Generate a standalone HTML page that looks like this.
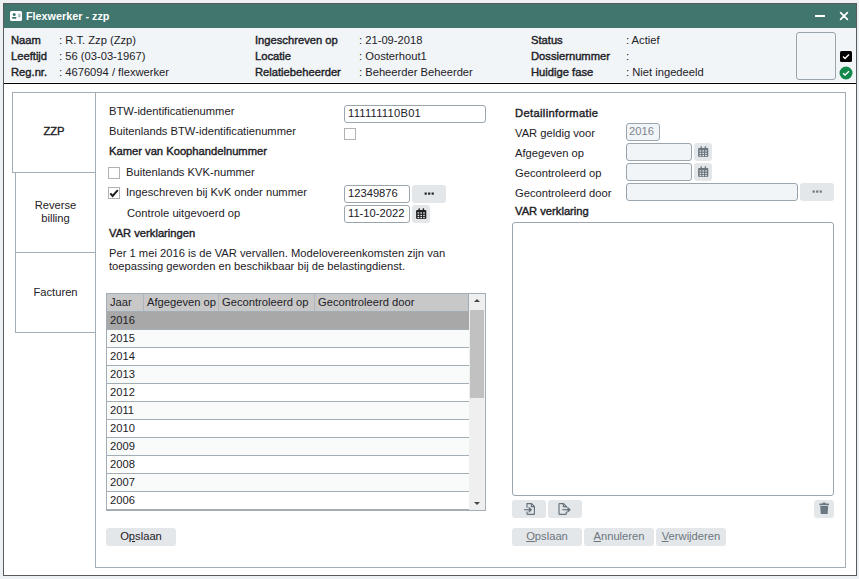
<!DOCTYPE html>
<html><head><meta charset="utf-8">
<style>
*{box-sizing:border-box;margin:0;padding:0}
html,body{width:859px;height:579px;overflow:hidden;background:#eef1f3;font-family:"Liberation Sans",sans-serif;font-size:11.2px;color:#1d2126}
.a{position:absolute}
.t{position:absolute;line-height:14px;white-space:nowrap}
.b{-webkit-text-stroke:0.4px #1d2126}
u{text-decoration-thickness:1px;text-underline-offset:1px}
.bb{font-weight:bold;font-size:10.8px}
#win{position:absolute;left:3px;top:3px;width:854px;height:573px;border:1px solid #5a5a5a;background:#fff}
#title{position:absolute;left:4px;top:4px;width:852px;height:24px;background:#40766e}
#hdr{position:absolute;left:4px;top:28px;width:852px;height:56px;background:#f1f5f8;border-bottom:1px solid #000;box-shadow:inset 0 -1px 0 #fff}
.inp{position:absolute;background:#fff;border:1px solid #9aa5ad;border-radius:3px}
.dis{background:#f2f5f8}
.btn{position:absolute;background:#e3e7ea;border-radius:3px}
.cb{position:absolute;width:12px;height:12px;border:1px solid #b2b2b2;background:#fff}
</style></head><body>
<div id="win"></div>
<div id="title"></div>
<div id="hdr"></div>
<!-- title content -->
<svg class="a" style="left:10px;top:11px" width="12" height="10" viewBox="0 0 12 10"><rect x="0" y="0" width="12" height="10" rx="1.5" fill="#fff"/><circle cx="4.2" cy="3.4" r="1.5" fill="#40766e"/><rect x="2" y="6" width="4.4" height="1.7" rx="0.8" fill="#40766e"/><rect x="8.2" y="2.6" width="2.3" height="3.8" fill="#a9c2be"/></svg>
<div class="t bb" style="left:26px;top:9px;color:#fff">Flexwerker - zzp</div>
<div class="a" style="left:815px;top:15px;width:10px;height:2px;background:#fff"></div>
<svg class="a" style="left:839px;top:11px" width="10" height="10" viewBox="0 0 10 10"><path d="M1.6 1.6L8.4 8.4M8.4 1.6L1.6 8.4" stroke="#fff" stroke-width="1.7" stroke-linecap="round"/></svg>
<!-- header -->
<div class="t b" style="left:11px;top:33px">Naam</div>
<div class="t b" style="left:11px;top:49px">Leeftijd</div>
<div class="t b" style="left:11px;top:65px">Reg.nr.</div>
<div class="t" style="left:59px;top:33px">: R.T. Zzp (Zzp)</div>
<div class="t" style="left:59px;top:49px">: 56 (03-03-1967)</div>
<div class="t" style="left:59px;top:65px">: 4676094 / flexwerker</div>
<div class="t b" style="left:255px;top:33px">Ingeschreven op</div>
<div class="t b" style="left:255px;top:49px">Locatie</div>
<div class="t b" style="left:255px;top:65px">Relatiebeheerder</div>
<div class="t" style="left:359px;top:33px">: 21-09-2018</div>
<div class="t" style="left:359px;top:49px">: Oosterhout1</div>
<div class="t" style="left:359px;top:65px">: Beheerder Beheerder</div>
<div class="t b" style="left:531px;top:33px">Status</div>
<div class="t b" style="left:531px;top:49px">Dossiernummer</div>
<div class="t b" style="left:531px;top:65px">Huidige fase</div>
<div class="t" style="left:626px;top:33px">: Actief</div>
<div class="t" style="left:626px;top:49px">:</div>
<div class="t" style="left:626px;top:65px">: Niet ingedeeld</div>
<div class="a" style="left:796px;top:32px;width:40px;height:48px;border:1px solid #9aa5ad;border-radius:3px"></div>
<svg class="a" style="left:840px;top:51px" width="12" height="11" viewBox="0 0 12 11"><rect width="12" height="11" rx="1.5" fill="#000"/><path d="M3 5.6L5 7.5L9 3.6" stroke="#fff" stroke-width="1.4" fill="none"/></svg>
<svg class="a" style="left:839px;top:66px" width="14" height="14" viewBox="0 0 14 14"><circle cx="7" cy="7" r="6.5" fill="#13894b"/><path d="M4 7.2L6 9.1L10 5.2" stroke="#fff" stroke-width="1.4" fill="none"/></svg>
<!-- panel -->
<div class="a" style="left:95px;top:92px;width:751px;height:476px;border:1px solid #a3adb5"></div>
<div class="a" style="left:12px;top:92px;width:83px;height:81px;border:1px solid #a3adb5;border-right:none;background:#fff"></div>
<div class="a" style="left:15px;top:172px;width:80px;height:81px;border:1px solid #a3adb5;border-right:none"></div>
<div class="a" style="left:15px;top:252px;width:80px;height:81px;border:1px solid #a3adb5;border-right:none"></div>
<div class="t b" style="left:12px;top:124px;width:84px;text-align:center">ZZP</div>
<div class="t" style="left:15px;top:199px;width:81px;text-align:center;line-height:13px;white-space:normal">Reverse<br>billing</div>
<div class="t" style="left:15px;top:285px;width:81px;text-align:center">Facturen</div>

<!-- form left -->
<div class="t" style="left:109px;top:104px">BTW-identificatienummer</div>
<div class="t" style="left:109px;top:124px">Buitenlands BTW-identificatienummer</div>
<div class="t b" style="left:109px;top:144px">Kamer van Koophandelnummer</div>
<div class="cb" style="left:108px;top:167px"></div>
<div class="t" style="left:126px;top:165px">Buitenlands KVK-nummer</div>
<div class="cb" style="left:108px;top:187px"></div>
<svg class="a" style="left:108px;top:187px" width="12" height="12" viewBox="0 0 12 12"><path d="M2.3 6.4L4.6 9L9.8 3.2" stroke="#1a1a1a" stroke-width="1.9" fill="none"/></svg>
<div class="t" style="left:126px;top:185px">Ingeschreven bij KvK onder nummer</div>
<div class="t" style="left:127px;top:206px">Controle uitgevoerd op</div>
<div class="t b" style="left:109px;top:226px">VAR verklaringen</div>
<div class="inp" style="left:344px;top:105px;width:142px;height:18px"></div>
<div class="t" style="left:348px;top:106px;letter-spacing:0.25px">111111110B01</div>
<div class="cb" style="left:344px;top:128px"></div>
<div class="inp" style="left:344px;top:185px;width:66px;height:18px"></div>
<div class="t" style="left:348px;top:186px">12349876</div>
<div class="btn" style="left:412px;top:185px;width:34px;height:18px"></div>
<svg class="a" style="left:424px;top:192px" width="11" height="3" viewBox="0 0 11 3"><rect x="0.6" y="0.5" width="2.2" height="2.2" fill="#222"/><rect x="4.1" y="0.5" width="2.2" height="2.2" fill="#222"/><rect x="7.6" y="0.5" width="2.2" height="2.2" fill="#222"/></svg>
<div class="inp" style="left:344px;top:205px;width:66px;height:18px"></div>
<div class="t" style="left:348px;top:206px">11-10-2022</div>
<div class="btn" style="left:412px;top:205px;width:18px;height:18px"></div>
<svg class="a" style="left:416px;top:208px" width="11" height="12" viewBox="0 0 11 12"><rect x="0.1" y="1.9" width="10.2" height="9.2" rx="1" fill="#222"/><rect x="2.5" y="0.2" width="1.4" height="2.6" rx="0.5" fill="#222"/><rect x="6.7" y="0.2" width="1.4" height="2.6" rx="0.5" fill="#222"/><rect x="1.6" y="4.3" width="1.6" height="1.3" fill="#e3e7ea"/><rect x="4.4" y="4.3" width="1.6" height="1.3" fill="#e3e7ea"/><rect x="7.2" y="4.3" width="1.6" height="1.3" fill="#e3e7ea"/><rect x="1.6" y="6.8" width="1.6" height="1.3" fill="#e3e7ea"/><rect x="4.4" y="6.8" width="1.6" height="1.3" fill="#e3e7ea"/><rect x="7.2" y="6.8" width="1.6" height="1.3" fill="#e3e7ea"/><rect x="1.6" y="9.0" width="1.6" height="1.3" fill="#e3e7ea"/><rect x="4.4" y="9.0" width="1.6" height="1.3" fill="#e3e7ea"/><rect x="7.2" y="9.0" width="1.6" height="1.3" fill="#e3e7ea"/></svg>
<div class="t" style="left:109px;top:247px;line-height:13px">Per 1 mei 2016 is de VAR vervallen. Modelovereenkomsten zijn van<br>toepassing geworden en beschikbaar bij de belastingdienst.</div>
<!-- table -->
<div class="a" style="left:106px;top:293px;width:380px;height:218px;border:1px solid #a3adb5;background:#fff"></div>
<div class="a" style="left:107px;top:294px;width:362px;height:18px;background:#c8c8c8;border-bottom:1px solid #a3adb5"></div>
<div class="a" style="left:468px;top:294px;width:1px;height:18px;background:#a3adb5"></div>
<div class="a" style="left:143px;top:294px;width:1px;height:17px;background:#aeb6bc"></div>
<div class="a" style="left:218px;top:294px;width:1px;height:17px;background:#aeb6bc"></div>
<div class="a" style="left:314px;top:294px;width:1px;height:17px;background:#aeb6bc"></div>
<div class="t" style="left:110px;top:295px">Jaar</div>
<div class="t" style="left:147px;top:295px">Afgegeven op</div>
<div class="t" style="left:222px;top:295px">Gecontroleerd op</div>
<div class="t" style="left:318px;top:295px">Gecontroleerd door</div>
<div class="a" style="left:107px;top:312px;width:362px;height:18px;background:#a8a8a8;border-bottom:1px solid #a3adb5"></div>
<div class="t" style="left:110px;top:313px">2016</div>
<div class="a" style="left:107px;top:330px;width:362px;height:18px;background:#f9fbfb;border-bottom:1px solid #a3adb5"></div>
<div class="t" style="left:110px;top:331px">2015</div>
<div class="a" style="left:107px;top:348px;width:362px;height:18px;background:#fff;border-bottom:1px solid #a3adb5"></div>
<div class="t" style="left:110px;top:349px">2014</div>
<div class="a" style="left:107px;top:366px;width:362px;height:18px;background:#f9fbfb;border-bottom:1px solid #a3adb5"></div>
<div class="t" style="left:110px;top:367px">2013</div>
<div class="a" style="left:107px;top:384px;width:362px;height:18px;background:#fff;border-bottom:1px solid #a3adb5"></div>
<div class="t" style="left:110px;top:385px">2012</div>
<div class="a" style="left:107px;top:402px;width:362px;height:18px;background:#f9fbfb;border-bottom:1px solid #a3adb5"></div>
<div class="t" style="left:110px;top:403px">2011</div>
<div class="a" style="left:107px;top:420px;width:362px;height:18px;background:#fff;border-bottom:1px solid #a3adb5"></div>
<div class="t" style="left:110px;top:421px">2010</div>
<div class="a" style="left:107px;top:438px;width:362px;height:18px;background:#f9fbfb;border-bottom:1px solid #a3adb5"></div>
<div class="t" style="left:110px;top:439px">2009</div>
<div class="a" style="left:107px;top:456px;width:362px;height:18px;background:#fff;border-bottom:1px solid #a3adb5"></div>
<div class="t" style="left:110px;top:457px">2008</div>
<div class="a" style="left:107px;top:474px;width:362px;height:18px;background:#f9fbfb;border-bottom:1px solid #a3adb5"></div>
<div class="t" style="left:110px;top:475px">2007</div>
<div class="a" style="left:107px;top:492px;width:362px;height:17px;background:#fff"></div>
<div class="t" style="left:110px;top:493px">2006</div>

<div class="a" style="left:469px;top:294px;width:16px;height:216px;background:#efefef"></div>
<div class="a" style="left:107px;top:509px;width:362px;height:1px;background:#a3adb5"></div>
<div class="a" style="left:470px;top:310px;width:14px;height:88px;background:#c1c1c1"></div>
<svg class="a" style="left:473px;top:298px" width="8" height="5" viewBox="0 0 8 5"><path d="M1 4L4 1L7 4Z" fill="#444"/></svg>
<svg class="a" style="left:473px;top:501px" width="8" height="5" viewBox="0 0 8 5"><path d="M1 1L4 4L7 1Z" fill="#444"/></svg>
<div class="btn" style="left:106px;top:528px;width:70px;height:18px"></div>
<div class="t" style="left:106px;top:529px;width:70px;text-align:center">O<u>p</u>slaan</div>
<!-- right detail -->
<div class="t b" style="left:515px;top:106px;letter-spacing:0.35px">Detailinformatie</div>
<div class="t" style="left:515px;top:126px">VAR geldig voor</div>
<div class="t" style="left:515px;top:146px">Afgegeven op</div>
<div class="t" style="left:515px;top:166px">Gecontroleerd op</div>
<div class="t" style="left:515px;top:186px">Gecontroleerd door</div>
<div class="t b" style="left:515px;top:204px">VAR verklaring</div>
<div class="inp dis" style="left:626px;top:123px;width:34px;height:18px"></div>
<div class="t" style="left:629px;top:124px;color:#7d868d">2016</div>
<div class="inp dis" style="left:626px;top:143px;width:66px;height:18px"></div>
<div class="btn" style="left:694px;top:143px;width:18px;height:18px"></div>
<svg class="a" style="left:698px;top:146px" width="11" height="12" viewBox="0 0 11 12"><rect x="0.1" y="1.9" width="10.2" height="9.2" rx="1" fill="#6d767d"/><rect x="2.5" y="0.2" width="1.4" height="2.6" rx="0.5" fill="#6d767d"/><rect x="6.7" y="0.2" width="1.4" height="2.6" rx="0.5" fill="#6d767d"/><rect x="1.6" y="4.3" width="1.6" height="1.3" fill="#e3e7ea"/><rect x="4.4" y="4.3" width="1.6" height="1.3" fill="#e3e7ea"/><rect x="7.2" y="4.3" width="1.6" height="1.3" fill="#e3e7ea"/><rect x="1.6" y="6.8" width="1.6" height="1.3" fill="#e3e7ea"/><rect x="4.4" y="6.8" width="1.6" height="1.3" fill="#e3e7ea"/><rect x="7.2" y="6.8" width="1.6" height="1.3" fill="#e3e7ea"/><rect x="1.6" y="9.0" width="1.6" height="1.3" fill="#e3e7ea"/><rect x="4.4" y="9.0" width="1.6" height="1.3" fill="#e3e7ea"/><rect x="7.2" y="9.0" width="1.6" height="1.3" fill="#e3e7ea"/></svg>
<div class="inp dis" style="left:626px;top:163px;width:66px;height:18px"></div>
<div class="btn" style="left:694px;top:163px;width:18px;height:18px"></div>
<svg class="a" style="left:698px;top:166px" width="11" height="12" viewBox="0 0 11 12"><rect x="0.1" y="1.9" width="10.2" height="9.2" rx="1" fill="#6d767d"/><rect x="2.5" y="0.2" width="1.4" height="2.6" rx="0.5" fill="#6d767d"/><rect x="6.7" y="0.2" width="1.4" height="2.6" rx="0.5" fill="#6d767d"/><rect x="1.6" y="4.3" width="1.6" height="1.3" fill="#e3e7ea"/><rect x="4.4" y="4.3" width="1.6" height="1.3" fill="#e3e7ea"/><rect x="7.2" y="4.3" width="1.6" height="1.3" fill="#e3e7ea"/><rect x="1.6" y="6.8" width="1.6" height="1.3" fill="#e3e7ea"/><rect x="4.4" y="6.8" width="1.6" height="1.3" fill="#e3e7ea"/><rect x="7.2" y="6.8" width="1.6" height="1.3" fill="#e3e7ea"/><rect x="1.6" y="9.0" width="1.6" height="1.3" fill="#e3e7ea"/><rect x="4.4" y="9.0" width="1.6" height="1.3" fill="#e3e7ea"/><rect x="7.2" y="9.0" width="1.6" height="1.3" fill="#e3e7ea"/></svg>
<div class="inp dis" style="left:626px;top:183px;width:172px;height:18px"></div>
<div class="btn" style="left:800px;top:183px;width:34px;height:18px"></div>
<svg class="a" style="left:812px;top:190px" width="11" height="3" viewBox="0 0 11 3"><rect x="0.6" y="0.5" width="2.2" height="2.2" fill="#6d767d"/><rect x="4.1" y="0.5" width="2.2" height="2.2" fill="#6d767d"/><rect x="7.6" y="0.5" width="2.2" height="2.2" fill="#6d767d"/></svg>
<div class="inp" style="left:512px;top:222px;width:322px;height:274px"></div>
<div class="btn" style="left:512px;top:500px;width:34px;height:18px"></div>
<div class="btn" style="left:548px;top:500px;width:34px;height:18px"></div>
<div class="btn" style="left:814px;top:500px;width:20px;height:18px"></div>

<svg class="a" style="left:523px;top:502px" width="14" height="14" viewBox="0 0 14 14" fill="none" stroke="#66727c" stroke-width="1.15"><path d="M4 5.8V1.6H8.6L11.4 4.4V11.8Q11.4 12.4 10.8 12.4H4.6Q4 12.4 4 11.8V9.6"/><path d="M8.4 1.6V4.6H11.4"/><path d="M1 7.7H8.2"/><path d="M6.3 5.8L8.3 7.7L6.3 9.6Z" fill="#66727c"/></svg>
<svg class="a" style="left:557px;top:502px" width="16" height="14" viewBox="0 0 16 14" fill="none" stroke="#66727c" stroke-width="1.15"><path d="M9.3 5.8V4.4L6.5 1.6H2.6Q2 1.6 2 2.2V11.8Q2 12.4 2.6 12.4H8.7Q9.3 12.4 9.3 11.8V9.6"/><path d="M6.3 1.6V4.6H9.3"/><path d="M5.2 7.7H12.6"/><path d="M11 5.8L13 7.7L11 9.6Z" fill="#66727c"/></svg>
<svg class="a" style="left:818px;top:502px" width="12" height="13" viewBox="0 0 12 13"><rect x="1.3" y="1.5" width="9.7" height="1.8" rx="0.5" fill="#6b7782"/><rect x="4.6" y="0.6" width="3" height="1.4" rx="0.6" fill="#6b7782"/><path d="M2.2 4.1H10.2L9.6 12H2.8Z" fill="#6b7782"/></svg>
<div class="btn" style="left:512px;top:528px;width:70px;height:18px"></div>
<div class="btn" style="left:584px;top:528px;width:70px;height:18px"></div>
<div class="btn" style="left:656px;top:528px;width:70px;height:18px"></div>
<div class="t" style="left:512px;top:529px;width:70px;text-align:center;color:#6d767d"><u>O</u>pslaan</div>
<div class="t" style="left:584px;top:529px;width:70px;text-align:center;color:#6d767d"><u>A</u>nnuleren</div>
<div class="t" style="left:656px;top:529px;width:70px;text-align:center;color:#6d767d"><u>V</u>erwijderen</div>
</body></html>
